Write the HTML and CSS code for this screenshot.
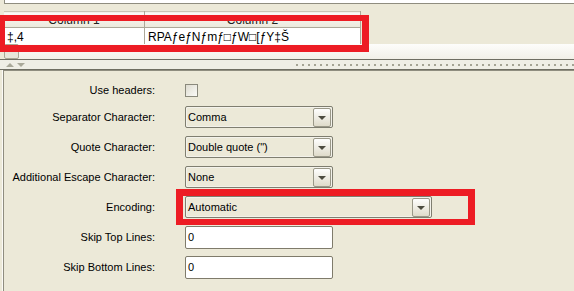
FILE: index.html
```html
<!DOCTYPE html>
<html lang="en">
<head>
    <meta charset="UTF-8">
    <title>CSV Import Options</title>
    <link rel="stylesheet" href="styles.css">
</head>
<body>
    <!-- Preview table -->
    <div class="top-pane">
        <div class="prev-strip"></div>
        <div class="viewport">
            <table class="grid">
                <tr>
                    <th>Column 1</th>
                    <th>Column 2</th>
                </tr>
                <tr>
                    <td>‡,4</td>
                    <td>RPAƒeƒNƒmƒ□ƒW□[ƒY‡Š</td>
                </tr>
            </table>
        </div>
        <div class="hscroll"><span class="scroll-btn"></span></div>
    </div>

    <!-- Split pane divider -->
    <div class="divider">
        <span class="arrow up"></span>
        <span class="arrow down"></span>
        <span class="dots"></span>
    </div>

    <!-- Options form -->
    <div class="form-panel">
        <div class="form">
            <label>Use headers:</label>
            <span class="checkbox"></span>

            <label>Separator Character:</label>
            <div class="combo"><span class="value">Comma</span><span class="drop"></span></div>

            <label>Quote Character:</label>
            <div class="combo"><span class="value">Double quote (")</span><span class="drop"></span></div>

            <label>Additional Escape Character:</label>
            <div class="combo"><span class="value">None</span><span class="drop"></span></div>

            <label>Encoding:</label>
            <div class="combo wide"><span class="value">Automatic</span><span class="drop"></span></div>

            <label>Skip Top Lines:</label>
            <div class="field">0</div>

            <label>Skip Bottom Lines:</label>
            <div class="field">0</div>
        </div>
    </div>

    <!-- Annotation marks -->
    <div class="mark mark-table"></div>
    <div class="mark mark-encoding"></div>
</body>
</html>
```

FILE: styles.css
```css
body {
    margin: 0;
    width: 574px;
    height: 291px;
    overflow: hidden;
    position: relative;
    background: #ece9d8;
    font: 11px "Liberation Sans", Arial, sans-serif;
    color: #000;
}

/* Preview table */
.top-pane {
    height: 59px;
}
.prev-strip {
    height: 3px;
    margin-left: 4px;
    border-left: 1px solid #8f8d7f;
    border-bottom: 1px solid #8f8d7f;
    background: #fff;
}
.viewport {
    height: 33px;
    padding: 7px 0 0 4px;
}
.grid {
    border-collapse: collapse;
    table-layout: fixed;
    width: 357px;
}
.grid th {
    height: 15px;
    padding: 0;
    font-weight: normal;
    font-size: 12px;
    color: #222;
    background: linear-gradient(#fbfbf8, #ebe8db);
    border-top: 1px solid #c9c6b6;
    border-right: 1px solid #aca899;
    border-bottom: 1px solid #aca899;
}
.grid th:first-child {
    width: 140px;
}
.grid td {
    height: 17px;
    padding: 0 0 0 3px;
    font-size: 12px;
    background: #fff;
    border-right: 1px solid #aca899;
    white-space: nowrap;
    overflow: hidden;
}
.hscroll {
    height: 15px;
    margin-left: 4px;
    background: linear-gradient(#fdfdfb, #f2f0e8);
}
.scroll-btn {
    display: block;
    width: 13px;
    height: 13px;
    border: 1px solid #a9a795;
    border-radius: 2px;
    background: #e8e6da;
}

/* Divider */
.divider {
    height: 9px;
    border-top: 1px solid #6f6e63;
    border-bottom: 1px solid #6f6e63;
    background: #efeee6;
    display: flex;
    align-items: center;
    padding-left: 6px;
}
.arrow {
    width: 0;
    height: 0;
    border-left: 4px solid transparent;
    border-right: 4px solid transparent;
}
.arrow.up {
    border-bottom: 4px solid #a9a899;
}
.arrow.down {
    margin-left: 3px;
    border-top: 4px solid #a9a899;
}
.dots {
    flex: 1;
    height: 2px;
    margin-left: 271px;
    background: linear-gradient(90deg, #a4a394 2px, transparent 2px) 0 0 / 6px 2px repeat-x;
}

/* Options form */
.form-panel {
    margin-left: 3px;
    height: 213px;
    border-top: 1px solid #8f8d7f;
    border-left: 1px solid #8f8d7f;
    box-shadow: -1px 0 0 #fbfaf6;
    padding-top: 7px;
}
.form {
    display: grid;
    grid-template-columns: 151px auto;
    grid-template-rows: 24px repeat(6, 30px);
    column-gap: 30px;
    align-items: center;
    justify-items: start;
}
.form label {
    justify-self: end;
    white-space: nowrap;
}
.checkbox {
    width: 11px;
    height: 11px;
    border: 1px solid #8a897c;
    background: linear-gradient(135deg, #dedcd0, #fbfbf8);
}
.combo {
    box-sizing: border-box;
    width: 148px;
    height: 22px;
    display: flex;
    align-items: center;
    padding: 0 1px 0 2px;
    border: 1px solid #7f7e70;
    border-radius: 2px;
    box-shadow: inset 0 0 0 1px #f3f2eb;
    background: #ece9d8;
}
.combo.wide {
    width: 247px;
}
.combo .value {
    flex: 1;
}
.drop {
    box-sizing: border-box;
    width: 18px;
    height: 19px;
    display: flex;
    align-items: center;
    justify-content: center;
    border: 1px solid #9a9888;
    border-radius: 2px;
    background: linear-gradient(#fefefd, #dfdbca);
}
.drop::after {
    content: "";
    border-top: 4px solid #4c4b3f;
    border-left: 4px solid transparent;
    border-right: 4px solid transparent;
    margin-top: 1px;
}
.field {
    box-sizing: border-box;
    width: 148px;
    height: 23px;
    padding-left: 2px;
    line-height: 21px;
    background: #fff;
    border: 1px solid #7f7b6b;
    border-radius: 2px;
}

/* Annotation marks */
.mark {
    position: absolute;
    box-sizing: border-box;
    border: 7px solid #ed1c24;
}
.mark-table {
    left: -2px;
    top: 15px;
    width: 371px;
    height: 37px;
    border-top-width: 6px;
}
.mark-encoding {
    left: 176px;
    top: 189px;
    width: 299px;
    height: 36px;
    border-bottom-width: 6px;
}
```
